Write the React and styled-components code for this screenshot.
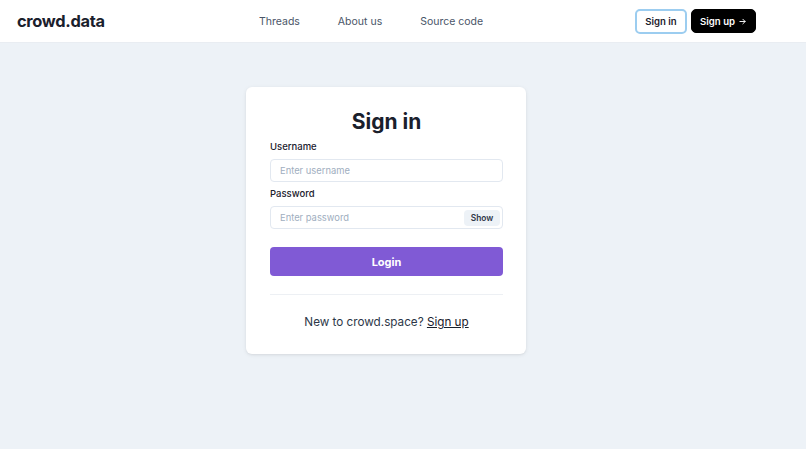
import React, { useState } from "react";
import styled, { createGlobalStyle } from "styled-components";

const Global = createGlobalStyle`
  html, body { margin: 0; padding: 0; }
  body {
    font-family: Inter, "Noto Sans", sans-serif;
    background: #edf2f7;
    color: #1a202c;
    -webkit-font-smoothing: antialiased;
  }
  * { box-sizing: border-box; }
`;

const Page = styled.div`
  min-height: 449px;
  display: flex;
  flex-direction: column;
  background: #edf2f7;
`;

const Header = styled.header`
  height: 43px;
  background: #fff;
  display: flex;
  align-items: center;
  padding: 0 50px 0 17px;
  border-bottom: 1px solid #e9edf2;
`;

const Logo = styled.div`
  flex: 0 0 242px;
  font-size: 16.4px;
  font-weight: 700;
  letter-spacing: -0.3px;
  color: #1a202c;
`;

const Nav = styled.nav`
  display: flex;
  gap: 38px;
`;

const NavLink = styled.a`
  font-size: 10.5px;
  color: #4a5568;
  text-decoration: none;
`;

const Actions = styled.div`
  margin-left: auto;
  display: flex;
  gap: 4px;
  align-items: center;
`;

const HeaderButton = styled.button`
  height: ${(p) => (p.$dark ? "24px" : "25px")};
  padding: 0 ${(p) => (p.$dark ? "8px" : "8.5px")};
  border-radius: 5px;
  font-family: inherit;
  font-size: 9.6px;
  font-weight: 600;
  display: inline-flex;
  align-items: center;
  gap: 3px;
  cursor: pointer;
  border: ${(p) => (p.$dark ? "1px solid #000" : "2px solid #9ccdf0")};
  background: ${(p) => (p.$dark ? "#000" : "#fff")};
  color: ${(p) => (p.$dark ? "#fff" : "#1a202c")};
`;

const Main = styled.main`
  flex: 1;
  display: flex;
  justify-content: center;
  padding: 44px 34px 0 0;
`;

const Card = styled.div`
  width: 280px;
  height: 267px;
  background: #fff;
  border-radius: 6px;
  box-shadow: 0 1px 4px rgba(0, 0, 0, 0.08), 0 1px 2px rgba(0, 0, 0, 0.04);
  padding: 21px 23px 24px 24px;
  display: flex;
  flex-direction: column;
`;

const Title = styled.h1`
  margin: 0;
  text-align: center;
  font-size: 21px;
  font-weight: 700;
  line-height: 28px;
  color: #1a202c;
`;

const Field = styled.div`
  display: flex;
  flex-direction: column;
  gap: 6px;
  margin-top: ${(p) => p.$mt || 0}px;
`;

const Label = styled.label`
  font-size: 9.5px;
  font-weight: 500;
  color: #1a202c;
  line-height: 12px;
`;

const InputWrap = styled.div`
  height: 23px;
  border: 1px solid #e2e8f0;
  border-radius: 4px;
  display: flex;
  align-items: center;
`;

const Input = styled.input`
  flex: 1;
  min-width: 0;
  height: 100%;
  border: none;
  outline: none;
  background: transparent;
  padding: 0 9px;
  font-family: inherit;
  font-size: 9.4px;
  color: #1a202c;
  &::placeholder { color: #a0aec0; }
`;

const ShowButton = styled.button`
  margin-right: 2px;
  height: 16px;
  width: 36px;
  padding: 0;
  border: none;
  border-radius: 4px;
  background: #edf2f7;
  color: #2d3748;
  font-family: inherit;
  font-size: 8.4px;
  font-weight: 600;
  cursor: pointer;
`;

const LoginButton = styled.button`
  margin-top: 18px;
  height: 29px;
  flex-shrink: 0;
  border: none;
  border-radius: 4px;
  background: #805ad5;
  color: #fff;
  font-family: inherit;
  font-size: 11px;
  font-weight: 700;
  cursor: pointer;
`;

const Divider = styled.hr`
  margin: 18px 0 0;
  border: none;
  border-top: 1px solid #edf0f4;
`;

const Footer = styled.p`
  margin: 19px 0 0;
  text-align: center;
  font-size: 11.7px;
  line-height: 16px;
  color: #2d3748;
`;

const FooterLink = styled.a`
  color: #1a202c;
  text-decoration: underline;
`;

export default function App() {
  const [show, setShow] = useState(false);
  return (
    <>
      <Global />
      <Page>
        <Header>
          <Logo>crowd.data</Logo>
          <Nav>
            <NavLink href="#">Threads</NavLink>
            <NavLink href="#">About us</NavLink>
            <NavLink href="#">Source code</NavLink>
          </Nav>
          <Actions>
            <HeaderButton>Sign in</HeaderButton>
            <HeaderButton $dark>
              Sign up
              <svg width="9" height="9" viewBox="0 0 24 24" fill="none" stroke="currentColor" strokeWidth="2.5" strokeLinecap="round" strokeLinejoin="round">
                <path d="M5 12h14" />
                <path d="M13 6l6 6-6 6" />
              </svg>
            </HeaderButton>
          </Actions>
        </Header>
        <Main>
          <Card>
            <Title>Sign in</Title>
            <Field $mt={5}>
              <Label>Username</Label>
              <InputWrap>
                <Input placeholder="Enter username" />
              </InputWrap>
            </Field>
            <Field $mt={6}>
              <Label>Password</Label>
              <InputWrap>
                <Input type={show ? "text" : "password"} placeholder="Enter password" />
                <ShowButton onClick={() => setShow(!show)}>{show ? "Hide" : "Show"}</ShowButton>
              </InputWrap>
            </Field>
            <LoginButton>Login</LoginButton>
            <Divider />
            <Footer>
              New to crowd.space? <FooterLink href="#">Sign up</FooterLink>
            </Footer>
          </Card>
        </Main>
      </Page>
    </>
  );
}
